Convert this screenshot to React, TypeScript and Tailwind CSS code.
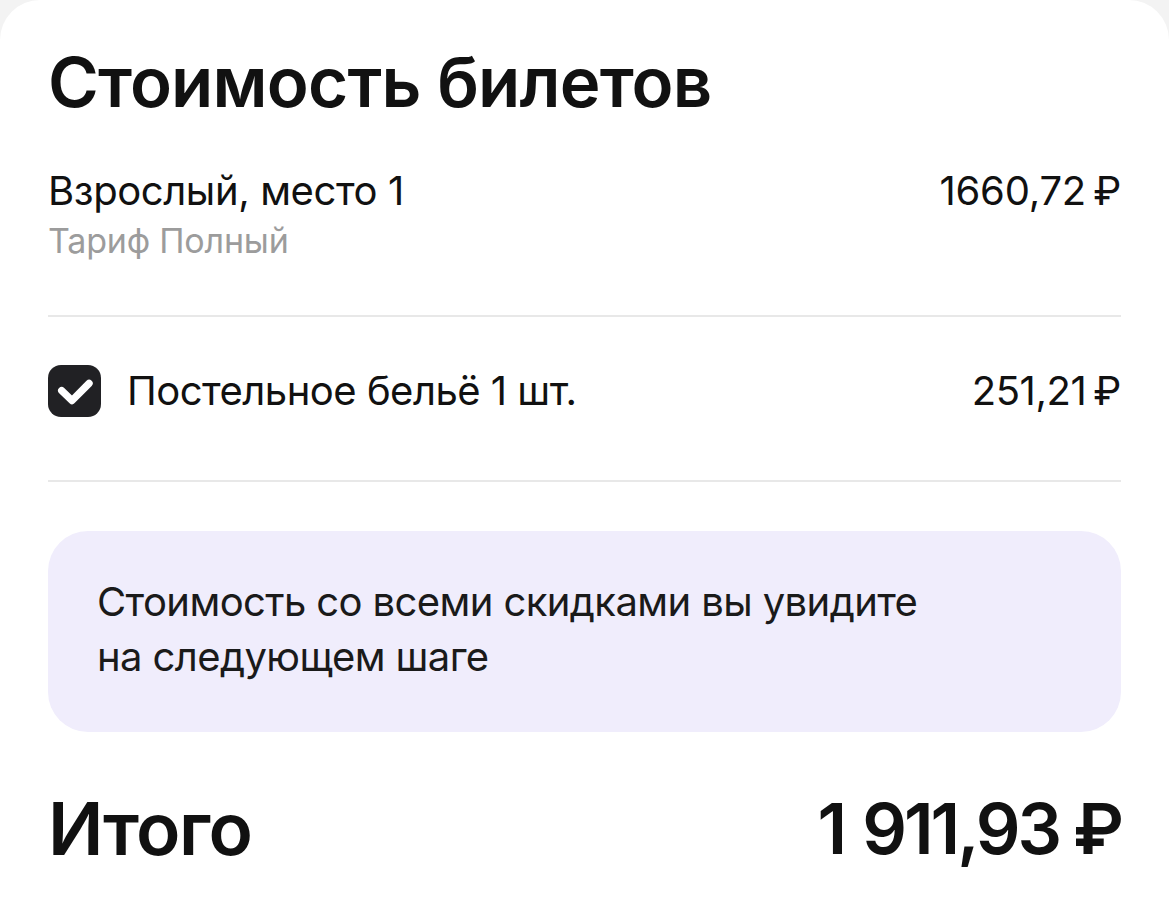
import React from 'react';

const font = { fontFamily: 'Inter, "Noto Sans", sans-serif' };

function CheckBox() {
  return (
    <div className="flex h-[52px] w-[53px] shrink-0 items-center justify-center rounded-[13px] bg-[#212124]">
      <svg viewBox="0 0 24 24" className="h-[53px] w-[53px]" fill="none">
        <path d="M6.2 11.6 L10.9 16.1 L18.6 8.3" stroke="#fff" strokeWidth="3.3" strokeLinecap="round" strokeLinejoin="round" />
      </svg>
    </div>
  );
}

export default function App() {
  return (
    <div className="min-h-screen bg-[#f3f3f3]" style={font}>
      <div className="min-h-[902px] rounded-t-[40px] bg-white px-[48px] pt-[48px] text-[#111]">
        <h1 className="text-[69px] font-semibold leading-[68px] tracking-[-0.8px]">Стоимость билетов</h1>

        <div className="mt-[49px] flex items-start justify-between">
          <div>
            <div className="text-[40px] leading-[52px] tracking-[-0.4px]">Взрослый, место 1</div>
            <div className="mt-[2px] text-[34px] leading-[44px] tracking-[-0.2px] text-[#9c9c9c]">Тариф Полный</div>
          </div>
          <div className="text-[40px] leading-[52px] tracking-[-0.2px]">1660,72{'\u2009'}₽</div>
        </div>

        <div className="mt-[52px] h-[2px] bg-[#e8e8e8]" />

        <div className="flex items-center justify-between pb-[63px] pt-[48px]">
          <div className="flex items-center gap-[26px]">
            <CheckBox />
            <span className="text-[40px] leading-[52px] tracking-[-0.5px]">Постельное бельё 1 шт.</span>
          </div>
          <span className="text-[40px] leading-[52px] tracking-[-0.4px]">251,21{'\u2009'}₽</span>
        </div>

        <div className="h-[2px] bg-[#e8e8e8]" />

        <div className="mt-[49px] rounded-[40px] bg-[#f0edfc] pb-[48px] pl-[49px] pr-[40px] pt-[43px] text-[40px] leading-[55px] tracking-[-0.6px] text-[#1a1a1a]">
          Стоимость со всеми скидками вы увидите
          <br />
          на следующем шаге
        </div>

        <div className="mt-[60px] flex items-center justify-between text-[73px] font-semibold leading-[73px]">
          <span className="tracking-[-1.5px]">Итого</span>
          <span className="flex items-baseline text-[70px] tracking-[-3px]">
            <span>1</span>
            <span className="ml-[18px]">911,93</span>
            <span className="ml-[14px]">₽</span>
          </span>
        </div>
      </div>
    </div>
  );
}
